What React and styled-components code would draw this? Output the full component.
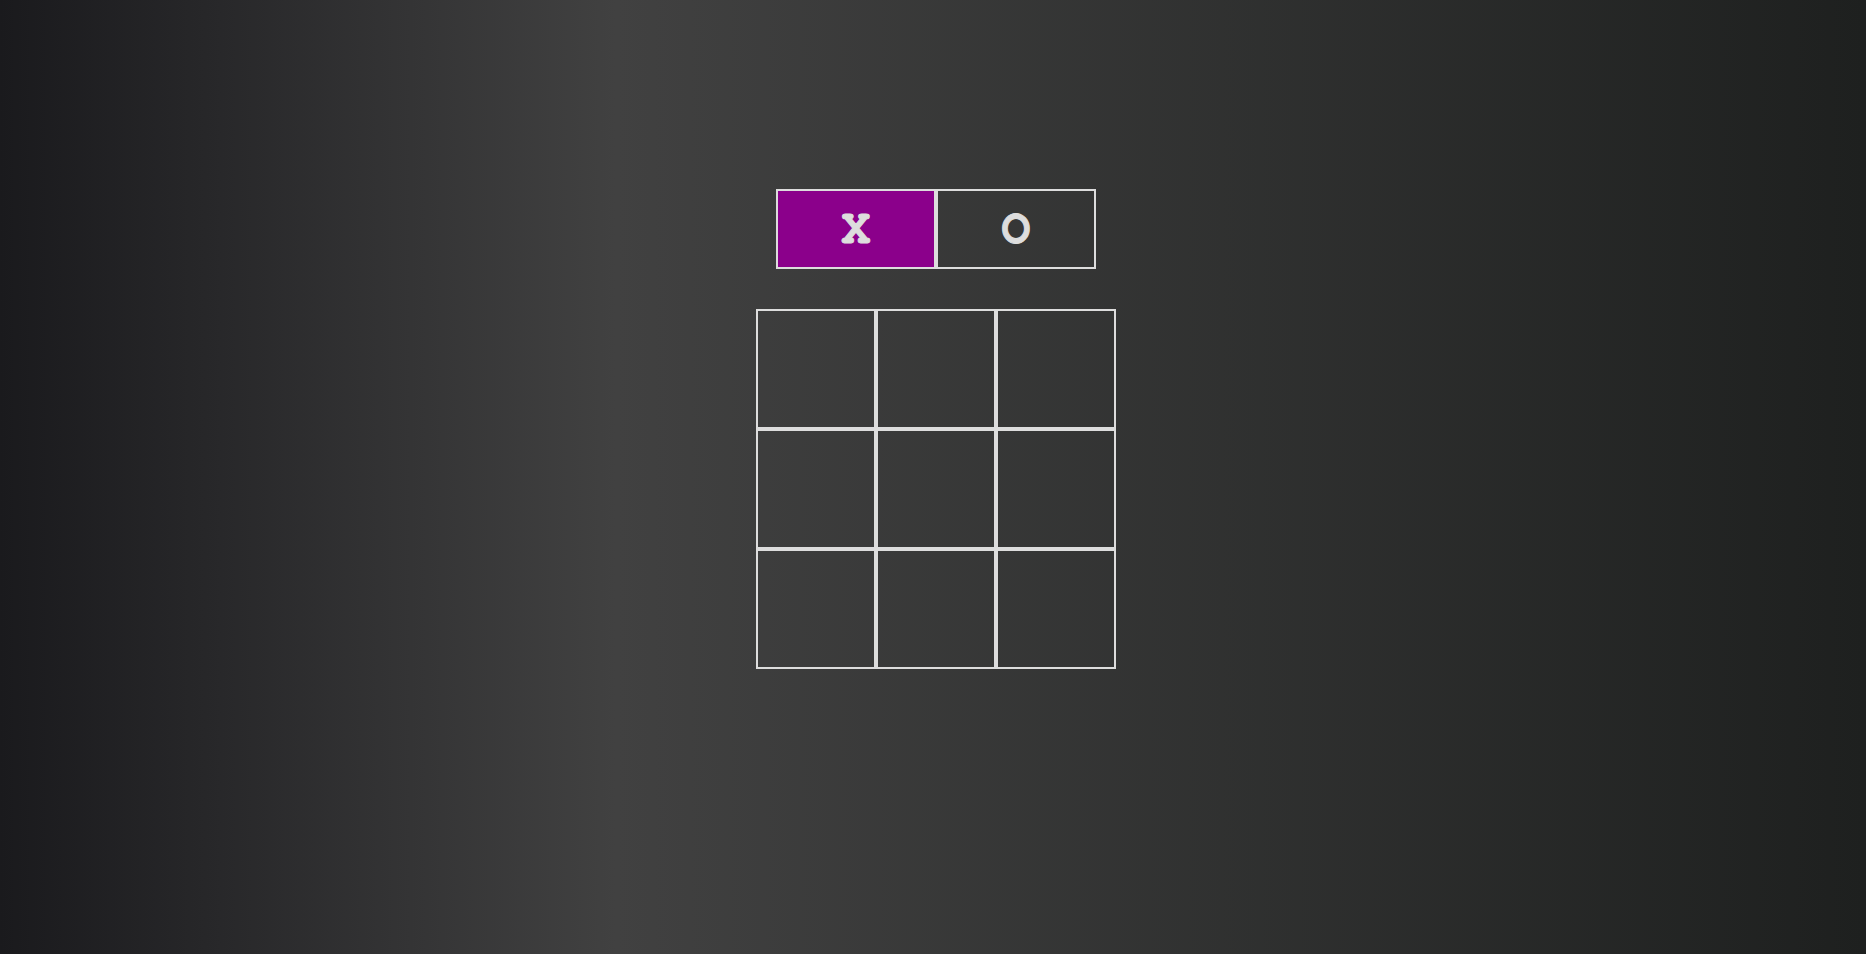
import React, { useState } from "react";
import styled, { createGlobalStyle } from "styled-components";

const GlobalStyle = createGlobalStyle`
  html, body {
    margin: 0;
    padding: 0;
  }
  body {
    min-height: 100vh;
    background: linear-gradient(to right, #1a1a1d 0%, #414141 33%, #1e201f 100%);
    font-family: "FreeMono", "Courier New", monospace;
    color: #dddddd;
  }
`;

const Page = styled.main`
  min-height: 100vh;
  display: flex;
  flex-direction: column;
  align-items: center;
  padding: 189px 0 0 6px;
  box-sizing: border-box;
  gap: 40px;
`;

const Toggle = styled.div`
  display: flex;
`;

const PlayerButton = styled.button`
  width: 160px;
  height: 80px;
  box-sizing: border-box;
  border: 2px solid #dddddd;
  background: ${(p) => (p.$active ? "#8b008b" : "transparent")};
  color: #dddddd;
  font-family: "FreeMono", "Courier New", monospace;
  font-weight: bold;
  font-size: 48px;
  -webkit-text-stroke: 1px #dddddd;
  display: flex;
  align-items: center;
  justify-content: center;
  padding: 0;
  cursor: pointer;
`;

const Board = styled.div`
  display: grid;
  grid-template-columns: repeat(3, 120px);
  grid-template-rows: repeat(3, 120px);
`;

const Cell = styled.button`
  box-sizing: border-box;
  width: 120px;
  height: 120px;
  border: 2px solid #dddddd;
  background: transparent;
  color: #dddddd;
  font-family: "FreeMono", "Courier New", monospace;
  font-weight: bold;
  font-size: 72px;
  -webkit-text-stroke: 1px #dddddd;
  padding: 0;
  cursor: pointer;
`;

export default function App() {
  const [player, setPlayer] = useState("X");
  const [cells, setCells] = useState(Array(9).fill(""));
  return (
    <>
      <GlobalStyle />
      <Page>
        <Toggle>
          <PlayerButton $active={player === "X"} onClick={() => setPlayer("X")}>
            X
          </PlayerButton>
          <PlayerButton $active={player === "O"} onClick={() => setPlayer("O")}>
            O
          </PlayerButton>
        </Toggle>
        <Board>
          {cells.map((c, i) => (
            <Cell
              key={i}
              onClick={() =>
                setCells((prev) => prev.map((v, j) => (j === i && !v ? player : v)))
              }
            >
              {c}
            </Cell>
          ))}
        </Board>
      </Page>
    </>
  );
}
